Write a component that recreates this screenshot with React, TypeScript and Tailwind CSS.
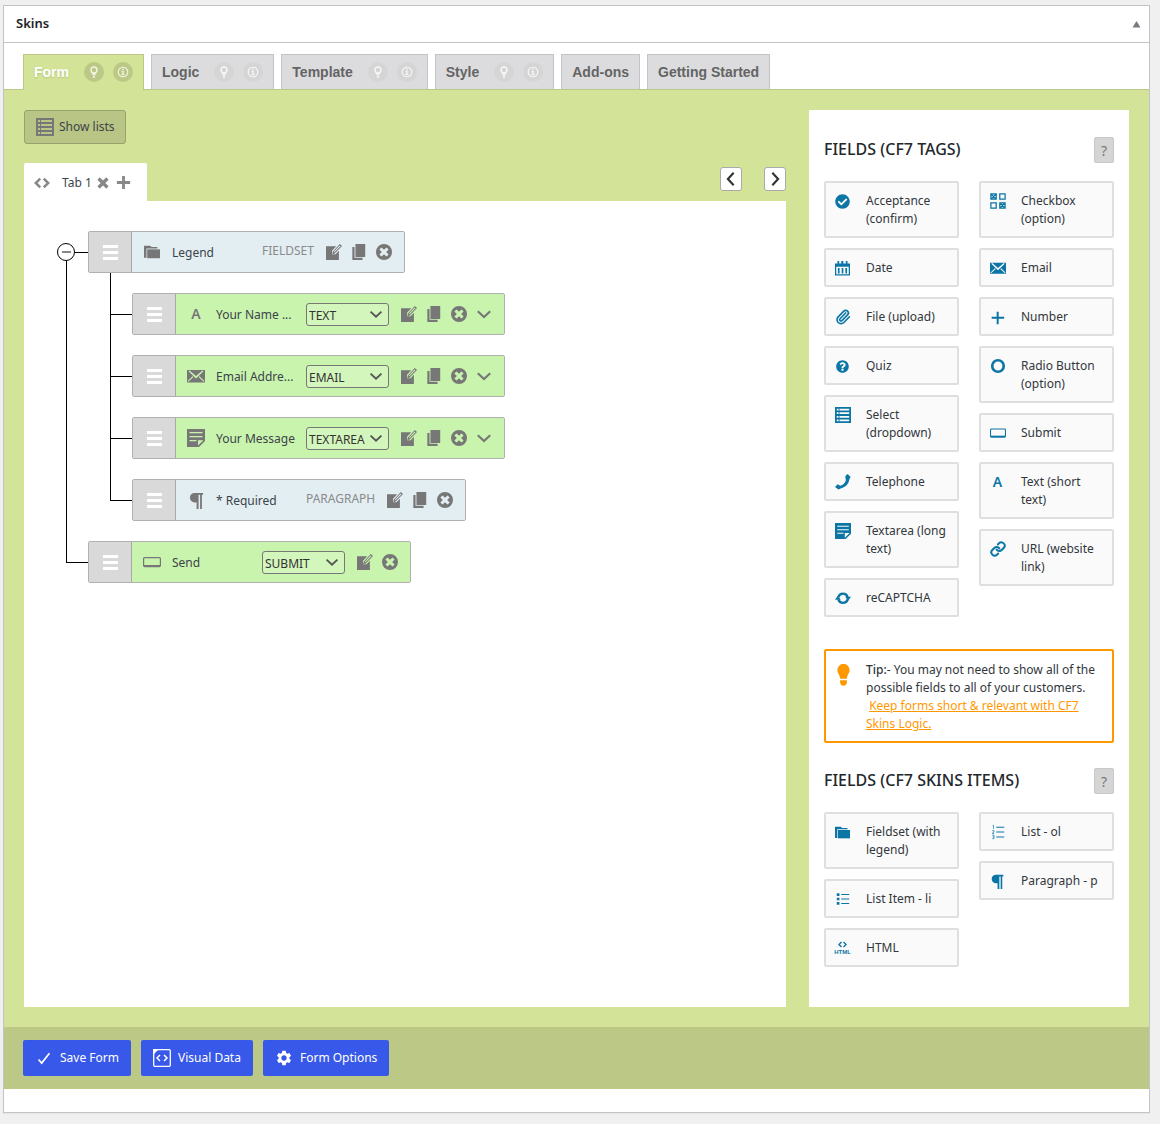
import type { ReactNode } from "react";
import { Link, Paperclip } from "lucide-react";
import { FaCheckCircle, FaQuestionCircle } from "react-icons/fa";
import { MdSettings } from "react-icons/md";

type IconProps = { className?: string };

function Svg({ className = "size-4", children }: IconProps & { children: ReactNode }) {
  return (
    <svg viewBox="0 0 18 18" className={className} fill="currentColor" aria-hidden="true">
      {children}
    </svg>
  );
}

function BulbOutlineIcon() {
  return (
    <Svg className="size-3">
      <circle cx="9" cy="6" r="4.5" fill="none" stroke="currentColor" strokeWidth="2" />
      <path d="M6.5 11h5v3h-5zM7.5 15h3v2.5h-3z" />
    </Svg>
  );
}

function InfoIcon() {
  return (
    <Svg className="size-3">
      <circle cx="9" cy="9" r="7.2" fill="none" stroke="currentColor" strokeWidth="1.6" />
      <path d="M8 4.2h2v2H8zM7 7.5h3v4.5h1.2v1.5H6.8V12H8V9H7z" />
    </Svg>
  );
}

function TableIcon({ className }: IconProps) {
  return (
    <Svg className={className}>
      <path
        fillRule="evenodd"
        d="M0 0h18v18H0zM2 2v2h2V2zm3 0v2h11V2zM2 6v2h2V6zm3 0v2h11V6zM2 10v2h2v-2zm3 0v2h11v-2zM2 14v2h2v-2zm3 0v2h11v-2z"
      />
    </Svg>
  );
}

function CodeIcon({ className }: IconProps) {
  return (
    <Svg className={className}>
      <path d="M7 4L2 9l5 5M11 4l5 5-5 5" fill="none" stroke="currentColor" strokeWidth="2.8" />
    </Svg>
  );
}

function FolderIcon({ className }: IconProps) {
  return (
    <Svg className={className}>
      <path d="M0 2h7l1.500 1.500H15V5H2.800v10.500H0z" />
      <path d="M3.600 6H18v10H3.600z" />
    </Svg>
  );
}

function MailIcon({ className }: IconProps) {
  return (
    <Svg className={className}>
      <path
        fillRule="evenodd"
        d="M0 3h18v12.500H0zM1.500 4.200L9 11.500l7.500-7.300-1-.8L9 9 2.500 3.400zM1.200 14.800L6.400 10l-.8-.8-5 4.800zM16.800 14.800L11.600 10l.8-.8 5 4.800z"
      />
    </Svg>
  );
}

function NoteIcon({ className }: IconProps) {
  return (
    <Svg className={className}>
      <path fillRule="evenodd" d="M0 0h18v12l-6 6H0zM2.500 3v1.200h13V3zm0 4v1.200h13V7zm0 4v1.200h7V11zm8.500 5.500l5.500-5.200H11z" />
    </Svg>
  );
}

function SubmitIcon({ className }: IconProps) {
  return (
    <Svg className={className}>
      <rect x="0.600" y="4.600" width="16.800" height="9" rx="1" fill="none" stroke="currentColor" strokeWidth="1.200" />
      <path d="M1 12h16v2H1z" />
    </Svg>
  );
}

function ParagraphIcon({ className }: IconProps) {
  return (
    <Svg className={className}>
      <path d="M7 1h9v2h-1.300v15h-1.900V3h-1.600v15H9.100v-7H7A5 5 0 0 1 7 1z" />
    </Svg>
  );
}

function LetterIcon() {
  return <span className="w-full text-center font-['Noto_Sans'] text-[14px] leading-4 font-semibold">A</span>;
}

function CheckboxesIcon({ className }: IconProps) {
  return (
    <Svg className={className}>
      <path
        d="M1 1h6v6H1zM11 1h6v6h-6zM1 11h6v6H1zM11 11h6v6h-6zM1 1l6 6M7 1L1 7M11 11l6 6M17 11l-6 6"
        fill="none"
        stroke="currentColor"
        strokeWidth="1.400"
      />
    </Svg>
  );
}

function CalendarIcon({ className }: IconProps) {
  return (
    <Svg className={className}>
      <path fillRule="evenodd" d="M0 3h3V0h2v3h2.500V0h2.500v3H13V0h2v3h3v14.500H0zM1.500 7v9h15V7z" />
      <path d="M3.500 8.500h2V15h-2zM8 8.500h2V15H8zM12.500 8.500h2V15h-2z" />
    </Svg>
  );
}

function PhoneIcon({ className }: IconProps) {
  return (
    <Svg className={className}>
      <path d="M11.500 2.500L14 0l3.500 3-1.500 3.500c-.5 4.500-4.500 8.500-9 9.500L4 17.500 0 14.500l3-3 3 1.700c3-.7 5.400-3.200 6.200-6.200z" />
    </Svg>
  );
}

function SyncIcon({ className }: IconProps) {
  return (
    <Svg className={className}>
      <path d="M3.800 8A5.400 5.400 0 0 1 14.200 8M14.200 10.500A5.400 5.400 0 0 1 3.800 10.500" fill="none" stroke="currentColor" strokeWidth="2.600" />
      <path d="M0 11l3.200-4.500L6.500 11zM11.500 7.500H18L14.800 12z" />
    </Svg>
  );
}

function PlusIcon({ className }: IconProps) {
  return (
    <Svg className={className}>
      <path d="M8 2h2.400v6H17v2.400h-6.600V17H8v-6.600H2V8h6z" />
    </Svg>
  );
}

function BoldPlusIcon({ className }: IconProps) {
  return (
    <Svg className={className}>
      <path d="M7.500 2h3v5.500H16v3h-5.500V16h-3v-5.500H2v-3h5.500z" />
    </Svg>
  );
}

function CrossIcon({ className }: IconProps) {
  return (
    <Svg className={className}>
      <path d="M4 4l10 10M14 4L4 14" fill="none" stroke="currentColor" strokeWidth="3.800" />
    </Svg>
  );
}

function RadioIcon({ className }: IconProps) {
  return (
    <Svg className={className}>
      <circle cx="9" cy="9" r="6.500" fill="none" stroke="currentColor" strokeWidth="3" />
    </Svg>
  );
}

function BulletListIcon({ className }: IconProps) {
  return (
    <Svg className={className}>
      <path d="M2 2.500h3v3H2zM2 7.500h3v3H2zM2 12.500h3v3H2zM7 3.500h9v1H7zM7 8.500h9v1.200H7zM7 13.500h9v1H7z" />
    </Svg>
  );
}

function NumberListIcon({ className }: IconProps) {
  return (
    <Svg className={className}>
      <path d="M7 3h9v1.200H7zM7 8.500h9v1.200H7zM7 14h9v1.200H7z" />
      <path d="M3 1.500h1v4M2.500 7.500h2v1.500l-2 1.500h2.200M2.500 12.500h2v4h-2M3 14.500h1.500" fill="none" stroke="currentColor" strokeWidth="0.800" />
    </Svg>
  );
}

function HtmlIcon() {
  return (
    <span className="flex w-full flex-col items-center">
      <CodeIcon className="size-[9px]" />
      <span className="font-['Liberation_Sans'] text-[6px] leading-[7px] font-bold">HTML</span>
    </span>
  );
}

function EditIcon() {
  return (
    <Svg>
      <path d="M0 2.500h11.500L6.800 7.500v4h4L14.500 7.500V18H0z" />
      <path d="M15.500 0L18 2.300 9.800 10.700l-2.600.7.400-2.800zM15.300 1.800l-6.500 6.800.8.8L16.300 2.600z" fillRule="evenodd" />
    </Svg>
  );
}

function CopyIcon() {
  return (
    <Svg>
      <path d="M5 0h11v14.500H5zM1.500 3.500H4v12h9V18H1.500z" />
    </Svg>
  );
}

function RemoveIcon() {
  return (
    <Svg>
      <path
        fillRule="evenodd"
        d="M9 0a9 9 0 1 1 0 18A9 9 0 0 1 9 0zM6.200 3.800L3.800 6.200 6.600 9l-2.800 2.800 2.400 2.400L9 11.400l2.800 2.800 2.400-2.400L11.400 9l2.800-2.800-2.400-2.400L9 6.600z"
      />
    </Svg>
  );
}

function ChevronIcon({ className }: IconProps) {
  return (
    <Svg className={className}>
      <path d="M2 6l7 6.500L16 6" fill="none" stroke="currentColor" strokeWidth="2.400" />
    </Svg>
  );
}

const tabs = [
  { label: "Form", help: true, active: true },
  { label: "Logic", help: true },
  { label: "Template", help: true },
  { label: "Style", help: true },
  { label: "Add-ons" },
  { label: "Getting Started" },
];

function TabBar() {
  return (
    <nav className="flex items-start gap-[7px] border-b border-[#bcc886] px-[19px] pt-[11px] font-['Liberation_Sans',sans-serif] text-[14px] font-bold">
      {tabs.map((tab) => (
        <button
          key={tab.label}
          type="button"
          className={
            tab.active
              ? "-mb-px flex h-[36px] items-center border border-b-0 border-[#bcc886] bg-[#d3e397] px-[10px] pb-px text-white [text-shadow:0_1px_2px_rgba(0,0,0,0.15)]"
              : "flex h-[35px] items-center border border-b-0 border-[#c3c4c7] bg-[#dcdcde] px-[10px] text-[#646464]"
          }
        >
          {tab.label}
          {tab.help && (
            <span className="ml-[15px] flex gap-[9px] text-white/80">
              <span className={tab.active ? "grid size-5 place-items-center rounded-full bg-[#bcc886]" : "grid size-5 place-items-center rounded-full bg-[#d5d5d5]"}>
                <BulbOutlineIcon />
              </span>
              <span className={tab.active ? "grid size-5 place-items-center rounded-full bg-[#bcc886]" : "grid size-5 place-items-center rounded-full bg-[#d5d5d5]"}>
                <InfoIcon />
              </span>
            </span>
          )}
        </button>
      ))}
    </nav>
  );
}

type RowProps = {
  icon: ReactNode;
  label: string;
  type: string;
  plain?: boolean;
  copy?: boolean;
  more?: boolean;
};

function FieldRow({ icon, label, type, plain, copy, more }: RowProps) {
  return (
    <div
      className={
        plain
          ? "flex h-[42px] items-center rounded-xs border border-[#b1b1b1] bg-[#e3eef3] pr-3"
          : "flex h-[42px] items-center rounded-xs border border-[#b1b1b1] bg-[#c9f4ae] pr-3"
      }
    >
      <button type="button" aria-label={`Move ${label}`} className="flex h-full w-[43px] flex-col items-center justify-center gap-[3px] border-r border-[#a9a9a9] bg-[#d9d9d9]">
        <span className="h-[3px] w-[15px] bg-white" />
        <span className="h-[3px] w-[15px] bg-white" />
        <span className="h-[3px] w-[15px] bg-white" />
      </button>
      <span className="ml-[11px] flex w-[18px] items-center justify-center text-[#777]">{icon}</span>
      <span className="ml-[11px] w-[80px] pt-[2px] whitespace-nowrap">{label}</span>
      {plain ? (
        <span className="ml-[10px] pb-[3px] text-[#8a8a8a]">{type}</span>
      ) : (
        <span className="relative ml-[10px] block text-[#333]">
          <select
            aria-label={`${label} type`}
            className="block h-[23px] w-[83px] appearance-none rounded-[3px] border border-[#777] bg-[#d3f6bd] pt-[2px] pl-[2px] text-[12px] leading-[19px]"
          >
            <option>{type}</option>
          </select>
          <ChevronIcon className="pointer-events-none absolute top-[4px] right-[6px] size-[14px] text-[#555]" />
        </span>
      )}
      <span className="ml-3 flex gap-[9px] text-[#777]">
        <button type="button" aria-label="Edit"><EditIcon /></button>
        {copy && <button type="button" aria-label="Duplicate"><CopyIcon /></button>}
        <button type="button" aria-label="Remove"><RemoveIcon /></button>
        {more && <button type="button" aria-label="More"><ChevronIcon /></button>}
      </span>
    </div>
  );
}

const children: RowProps[] = [
  { icon: <LetterIcon />, label: "Your Name ...", type: "TEXT", copy: true, more: true },
  { icon: <MailIcon className="size-[18px]" />, label: "Email Addre...", type: "EMAIL", copy: true, more: true },
  { icon: <NoteIcon className="size-[18px]" />, label: "Your Message", type: "TEXTAREA", copy: true, more: true },
  { icon: <ParagraphIcon className="size-[17px]" />, label: "* Required", type: "PARAGRAPH", copy: true, plain: true },
];

function FormTree() {
  return (
    <ul className="pt-[30px] pl-[33px]">
      <li className="flex">
        <div className="flex w-[31px] flex-col pt-3">
          <div className="flex items-center">
            <button type="button" aria-label="Collapse" className="grid size-[18px] place-items-center rounded-full border border-black bg-white">
              <span className="h-[2px] w-[9px] bg-[#888]" />
            </button>
            <span className="h-px flex-1 bg-black" />
          </div>
          <span className="ml-[9px] flex-1 border-l border-black" />
        </div>
        <div>
          <div className="flex">
            <FieldRow icon={<FolderIcon className="size-4" />} label="Legend" type="FIELDSET" copy plain />
          </div>
          <ul className="pl-[22px]">
            {children.map((row, i) => (
              <li key={row.label} className="flex">
                <div className="flex w-[22px] flex-col">
                  <span className="h-[42px] border-b border-l border-black" />
                  {i < children.length - 1 && <span className="flex-1 border-l border-black" />}
                </div>
                <div className="pt-5">
                  <FieldRow {...row} />
                </div>
              </li>
            ))}
          </ul>
        </div>
      </li>
      <li className="flex pl-[9px]">
        <span className="h-[42px] w-[22px] border-b border-l border-black" />
        <div className="pt-5">
          <FieldRow icon={<SubmitIcon className="size-[18px]" />} label="Send" type="SUBMIT" />
        </div>
      </li>
    </ul>
  );
}

type Item = { label: string; icon: ReactNode };

const tagsLeft: Item[] = [
  { label: "Acceptance (confirm)", icon: <FaCheckCircle className="size-[15px]" /> },
  { label: "Date", icon: <CalendarIcon className="size-[15px]" /> },
  { label: "File (upload)", icon: <Paperclip className="size-4" strokeWidth={2.5} /> },
  { label: "Quiz", icon: <FaQuestionCircle className="size-[13px]" /> },
  { label: "Select (dropdown)", icon: <TableIcon className="size-4" /> },
  { label: "Telephone", icon: <PhoneIcon className="size-4" /> },
  { label: "Textarea (long text)", icon: <NoteIcon className="size-4" /> },
  { label: "reCAPTCHA", icon: <SyncIcon className="size-4" /> },
];

const tagsRight: Item[] = [
  { label: "Checkbox (option)", icon: <CheckboxesIcon className="size-4" /> },
  { label: "Email", icon: <MailIcon className="size-4" /> },
  { label: "Number", icon: <PlusIcon className="size-[15px]" /> },
  { label: "Radio Button (option)", icon: <RadioIcon className="size-4" /> },
  { label: "Submit", icon: <SubmitIcon className="size-4" /> },
  { label: "Text (short text)", icon: <LetterIcon /> },
  { label: "URL (website link)", icon: <Link className="size-4" strokeWidth={3} /> },
];

const itemsLeft: Item[] = [
  { label: "Fieldset (with legend)", icon: <FolderIcon className="size-[15px]" /> },
  { label: "List Item - li", icon: <BulletListIcon className="size-4" /> },
  { label: "HTML", icon: <HtmlIcon /> },
];

const itemsRight: Item[] = [
  { label: "List - ol", icon: <NumberListIcon className="size-4" /> },
  { label: "Paragraph - p", icon: <ParagraphIcon className="size-[15px]" /> },
];

function Column({ items }: { items: Item[] }) {
  return (
    <div className="flex flex-col gap-[10px]">
      {items.map((item) => (
        <button
          key={item.label}
          type="button"
          className="flex items-start gap-[15px] rounded-xs border-2 border-[#dfdfdf] bg-[#fafafa] pt-[9px] pr-2 pb-2 pl-2 text-left leading-[18px] text-[#32373c]"
        >
          <span className="flex h-[18px] w-[17px] shrink-0 items-center justify-center text-[#0b76a6]">{item.icon}</span>
          <span>{item.label}</span>
        </button>
      ))}
    </div>
  );
}

function FieldGroup({ title, left, right }: { title: string; left: Item[]; right: Item[] }) {
  return (
    <section>
      <div className="flex items-start justify-between">
        <h2 className="text-[16px] leading-6 font-medium text-[#23282d]">{title}</h2>
        <button type="button" aria-label={`Help: ${title}`} className="h-[26px] w-5 rounded-xs border border-[#c8c8c8] bg-[#d5d5d5] text-[14px] text-[#777]">
          ?
        </button>
      </div>
      <div className="mt-[18px] grid grid-cols-2 items-start gap-5">
        <Column items={left} />
        <Column items={right} />
      </div>
    </section>
  );
}

function Sidebar() {
  return (
    <aside className="w-[320px] shrink-0 bg-white px-[15px] pt-[27px] pb-10">
      <FieldGroup title="FIELDS (CF7 TAGS)" left={tagsLeft} right={tagsRight} />
      <div className="mt-8 mb-[25px] flex gap-[13px] rounded-xs border-2 border-[#ff9800] pt-[10px] pr-2 pb-2 pl-2 leading-[18px] text-[#32373c]">
        <Svg className="mt-[3px] h-[23px] w-[19px] shrink-0 text-[#ff9800]">
          <path d="M9-2a5.800 5.800 0 0 1 5.800 5.800c0 3.200-2.300 4-2.600 8.200H5.800C5.500 7.800 3.200 7 3.200 3.800A5.800 5.800 0 0 1 9-2zM5.800 13.400h6.400v2.200c0 1.500-1.200 3-3.200 3s-3.200-1.500-3.200-3z" />
        </Svg>
        <p>
          <b className="font-medium">Tip:</b>- You may not need to show all of the possible fields to all of your customers.
          <br />
          &nbsp;
          <a href="#logic" className="text-[#ff9800] underline">
            Keep forms short &amp; relevant with CF7 Skins Logic.
          </a>
        </p>
      </div>
      <FieldGroup title="FIELDS (CF7 SKINS ITEMS)" left={itemsLeft} right={itemsRight} />
    </aside>
  );
}

function FooterButton({ icon, children }: { icon: ReactNode; children: ReactNode }) {
  return (
    <button type="button" className="flex h-9 items-center gap-[7px] rounded-xs bg-[#3858e9] px-3 text-white">
      <span className="grid size-[18px] place-items-center">{icon}</span>
      {children}
    </button>
  );
}

export default function App() {
  return (
    <div className="min-h-screen bg-[#f0f0f1] pt-[5px] pr-[10px] pl-[3px] font-['Noto_Sans',sans-serif] text-[12px] text-[#3c434a]">
      <div className="border border-[#c3c4c7] bg-white shadow-[0_1px_1px_rgba(0,0,0,0.04)]">
        <header className="flex h-[37px] items-center justify-between border-b border-[#c3c4c7] pr-2 pl-3">
          <h1 className="text-[13px] font-semibold text-[#1d2327]">Skins</h1>
          <button type="button" aria-label="Toggle panel" className="text-[#787c82]">
            <Svg className="size-[9px]">
              <path d="M9 2l8 13H1z" />
            </Svg>
          </button>
        </header>

        <TabBar />

        <main className="flex gap-[23px] bg-[#d3e397] p-5">
          <div className="flex min-w-0 flex-1 flex-col">
            <button type="button" className="flex h-[34px] items-center gap-[5px] self-start rounded-[3px] border border-[#98a26c] bg-[#b9c584] pr-[10px] pl-[11px]">
              <TableIcon className="size-[18px] text-[#777]" />
              Show lists
            </button>
            <div className="mt-[19px] flex h-[38px] items-start justify-between">
              <div className="flex h-full items-center rounded-t-xs bg-white pt-px pr-[15px] pl-[10px] text-[#888]">
                <CodeIcon className="size-4" />
                <span className="mr-[3px] ml-3 text-[#3c434a]">Tab 1</span>
                <button type="button" aria-label="Remove tab"><CrossIcon className="size-4" /></button>
                <button type="button" aria-label="Add tab" className="ml-1"><BoldPlusIcon className="size-[17px]" /></button>
              </div>
              <div className="flex gap-[22px] pt-1 text-[#333]">
                <button type="button" aria-label="Previous tab" className="grid h-6 w-[22px] place-items-center rounded-[3px] border border-[#aaa] bg-white">
                  <ChevronIcon className="size-4 rotate-90" />
                </button>
                <button type="button" aria-label="Next tab" className="grid h-6 w-[22px] place-items-center rounded-[3px] border border-[#aaa] bg-white">
                  <ChevronIcon className="size-4 -rotate-90" />
                </button>
              </div>
            </div>
            <div className="flex-1 bg-white">
              <FormTree />
            </div>
          </div>
          <Sidebar />
        </main>

        <footer className="flex gap-[10px] bg-[#bcc886] px-[19px] py-[13px]">
          <FooterButton
            icon={
              <Svg className="size-[14px]">
                <path d="M2 11l4 4.500L16 3" fill="none" stroke="currentColor" strokeWidth="2.200" />
              </Svg>
            }
          >
            Save Form
          </FooterButton>
          <FooterButton
            icon={
              <Svg className="size-[18px]">
                <rect x="0.700" y="0.700" width="16.600" height="16.600" rx="1" fill="none" stroke="currentColor" strokeWidth="1.300" />
                <path d="M0 0h6L0 6z" />
                <path d="M7 6L4 9l3 3M11 6l3 3-3 3" fill="none" stroke="currentColor" strokeWidth="1.500" />
              </Svg>
            }
          >
            Visual Data
          </FooterButton>
          <FooterButton icon={<MdSettings className="size-[18px]" />}>Form Options</FooterButton>
        </footer>
        <div className="h-[23px]" />
      </div>
    </div>
  );
}
